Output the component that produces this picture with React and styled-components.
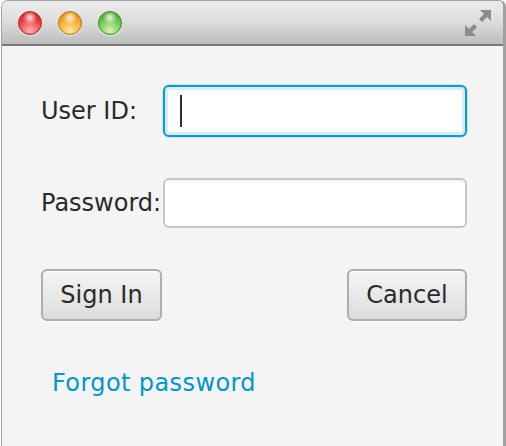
import React from "react"
import styled, { createGlobalStyle } from "styled-components"

const GlobalStyle = createGlobalStyle`
  html, body {
    margin: 0;
    padding: 0;
    background: #ffffff;
    font-family: "DejaVu Sans", Verdana, sans-serif;
  }
`

const Window = styled.div`
  width: 501px;
  height: 460px;
  margin-left: 1px;
  border: 1px solid #a3a3a3;
  border-right: 3px solid #a0a0a0;
  border-bottom: none;
  border-radius: 7px 7px 0 0;
  background: #f4f4f4;
  display: flex;
  flex-direction: column;
  overflow: hidden;
`

const TitleBar = styled.div`
  height: 43px;
  flex: none;
  display: flex;
  align-items: center;
  padding: 0 10px 0 16px;
  background: linear-gradient(#ececec 0%, #dedede 45%, #bdbdbd 100%);
  border-bottom: 2px solid #787878;
  gap: 16px;
`

const Light = styled.span`
  width: 24px;
  height: 24px;
  border-radius: 50%;
  box-sizing: border-box;
  border: 1px solid ${p => p.$edge};
  background:
    radial-gradient(circle at 50% 25%, rgba(255,255,255,0.85) 0%, rgba(255,255,255,0) 35%),
    radial-gradient(circle at 50% 85%, ${p => p.$glow} 0%, ${p => p.$base} 60%, ${p => p.$dark} 100%);
  box-shadow: 0 1px 1px rgba(255,255,255,0.7);
  margin-top: 1px;
`

const Spacer = styled.div`
  flex: 1;
`

const ResizeIcon = styled.svg`
  width: 30px;
  height: 30px;
  margin-top: 1px;
`

const Content = styled.div`
  padding: 39px 36px 0 39px;
  display: flex;
  flex-direction: column;
`

const Form = styled.div`
  display: grid;
  grid-template-columns: auto 1fr;
  column-gap: 2px;
  row-gap: 41px;
  align-items: center;
`

const Label = styled.div`
  font-size: 24px;
  color: #2a2a2a;
  line-height: 28px;
`

const Field = styled.div`
  box-sizing: border-box;
  height: ${p => (p.$focused ? "52px" : "50px")};
  background: #ffffff;
  border-radius: 6px;
  display: flex;
  align-items: center;
  padding-left: 15px;
  ${p =>
    p.$focused
      ? `
    border: 2px solid #0a9ad6;
    box-shadow: inset 0 0 0 3px #d6edf9, 0 0 0 1px rgba(10,154,214,0.18);
  `
      : `
    border: 2px solid #c6c6c6;
    box-shadow: inset 0 3px 3px -2px rgba(0,0,0,0.08);
  `}
`

const Caret = styled.span`
  width: 2px;
  height: 32px;
  background: #2e2e2e;
`

const ButtonRow = styled.div`
  display: flex;
  justify-content: space-between;
  margin-top: 41px;
`

const Button = styled.button`
  box-sizing: border-box;
  height: 52px;
  padding: 0 16px;
  min-width: ${p => p.$width || "auto"};
  font-family: "DejaVu Sans", Verdana, sans-serif;
  font-size: 24px;
  color: #2a2a2a;
  border: 2px solid #adadad;
  border-radius: 6px;
  background: linear-gradient(#f4f4f4, #dcdcdc);
  box-shadow: inset 0 1px 0 #ffffff, 0 1px 0 rgba(255,255,255,0.6);
`

const Link = styled.a`
  margin-top: 48px;
  margin-left: 11px;
  font-size: 24px;
  line-height: 28px;
  color: #0096cc;
  text-decoration: none;
  letter-spacing: 0.4px;
  cursor: pointer;
`

const App = () => {
  return (
    <>
      <GlobalStyle />
      <Window>
        <TitleBar>
          <Light $edge="#a82a2a" $base="#e8393b" $glow="#ffb0b0" $dark="#b81c1e" />
          <Light $edge="#b57a12" $base="#f2a42a" $glow="#ffe79a" $dark="#cc7c08" />
          <Light $edge="#3f8a22" $base="#67c04a" $glow="#d8f6b5" $dark="#3e9322" />
          <Spacer />
          <ResizeIcon viewBox="0 0 30 30">
            <path d="M28 2 L28 13 L24 9 L19 14 L16 11 L21 6 L17 2 Z" fill="#8b8b8b" />
            <path d="M2 28 L2 17 L6 21 L11 16 L14 19 L9 24 L13 28 Z" fill="#8b8b8b" />
          </ResizeIcon>
        </TitleBar>
        <Content>
          <Form>
            <Label>User ID:</Label>
            <Field $focused>
              <Caret />
            </Field>
            <Label>Password:</Label>
            <Field />
          </Form>
          <ButtonRow>
            <Button $width="121px">Sign In</Button>
            <Button $width="120px">Cancel</Button>
          </ButtonRow>
          <Link>Forgot password</Link>
        </Content>
      </Window>
    </>
  )
}

export default App
